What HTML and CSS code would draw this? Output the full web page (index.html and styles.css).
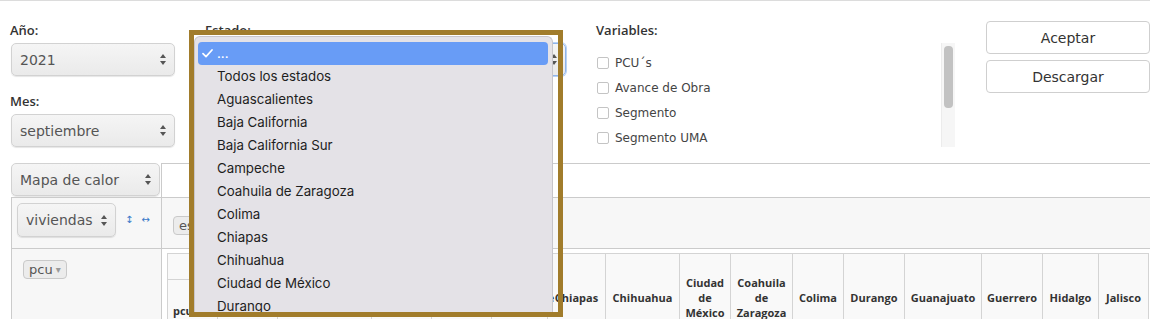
FILE: index.html
```html
<!DOCTYPE html>
<html lang="es">
<head>
<meta charset="utf-8">
<title>Reporte</title>
<link rel="stylesheet" href="styles.css">
</head>
<body>
<div class="page">
  <div class="topline"></div>
  <div class="filters">
    <div class="col">
      <div class="lbl">Año:</div>
      <div class="sel"><span>2021</span><svg class="arr" width="6" height="11" viewBox="0 0 6 11"><path d="M3 0 L6 4 L0 4 Z M0 7 L6 7 L3 11 Z" fill="#555"/></svg></div>
      <div class="lbl lbl-mes">Mes:</div>
      <div class="sel"><span>septiembre</span><svg class="arr" width="6" height="11" viewBox="0 0 6 11"><path d="M3 0 L6 4 L0 4 Z M0 7 L6 7 L3 11 Z" fill="#555"/></svg></div>
    </div>
    <div class="col">
      <div class="lbl">Estado:</div>
      <div class="sel sel-focus"><span>...</span><svg class="arr" width="6" height="11" viewBox="0 0 6 11"><path d="M3 0 L6 4 L0 4 Z M0 7 L6 7 L3 11 Z" fill="#555"/></svg></div>
    </div>
    <div class="col">
      <div class="lbl">Variables:</div>
      <div class="varbox">
        <ul class="varlist">
          <li><span class="cb"></span>PCU´s</li>
          <li><span class="cb"></span>Avance de Obra</li>
          <li><span class="cb"></span>Segmento</li>
          <li><span class="cb"></span>Segmento UMA</li>
        </ul>
        <div class="vscroll"><div class="thumb"></div></div>
      </div>
    </div>
    <div class="col col-btns">
      <button class="btn">Aceptar</button>
      <button class="btn">Descargar</button>
    </div>
  </div>

  <div class="pvt">
    <div class="c-renderer">
      <div class="sel sel-r"><span>Mapa de calor</span><svg class="arr" width="6" height="11" viewBox="0 0 6 11"><path d="M3 0 L6 4 L0 4 Z M0 7 L6 7 L3 11 Z" fill="#555"/></svg></div>
    </div>
    <div class="c-unused"></div>
    <div class="c-vals">
      <div class="sel sel-v"><span>viviendas</span><svg class="arr" width="6" height="11" viewBox="0 0 6 11"><path d="M3 0 L6 4 L0 4 Z M0 7 L6 7 L3 11 Z" fill="#555"/></svg></div>
      <span class="ord">↕</span><span class="ord">↔</span>
    </div>
    <div class="c-cols"><span class="pill">estado <span class="tri">▾</span></span></div>
    <div class="c-rows"><span class="pill">pcu <span class="tri">▾</span></span></div>
    <div class="c-area">
      <table class="ptable">
        <thead>
          <tr class="hr1">
            <th class="w-a"></th>
            <th class="w-b axis">estado</th>
            <th class="w-ags" rowspan="2">Aguascalientes</th>
            <th class="w-bc" rowspan="2">Baja California</th>
            <th class="w-bcs" rowspan="2">Baja California Sur</th>
            <th class="w-cam" rowspan="2">Campeche</th>
            <th class="w-chs" rowspan="2">Chiapas</th>
            <th class="w-chh" rowspan="2">Chihuahua</th>
            <th class="w-cdmx" rowspan="2">Ciudad de México</th>
            <th class="w-coa" rowspan="2">Coahuila de Zaragoza</th>
            <th class="w-col" rowspan="2">Colima</th>
            <th class="w-dur" rowspan="2">Durango</th>
            <th class="w-gto" rowspan="2">Guanajuato</th>
            <th class="w-gro" rowspan="2">Guerrero</th>
            <th class="w-hgo" rowspan="2">Hidalgo</th>
            <th class="w-jal" rowspan="2">Jalisco</th>
          </tr>
          <tr class="hr2">
            <th class="axis">pcu</th>
            <th></th>
          </tr>
        </thead>
      </table>
    </div>
  </div>

  <div class="menu-frame">
    <div class="menu">
      <div class="item active"><svg class="check" width="11" height="9" viewBox="0 0 11 9"><path d="M1 4.6 L4 7.6 L10 1" fill="none" stroke="#fff" stroke-width="1.7" stroke-linecap="round" stroke-linejoin="round"/></svg>...</div>
      <div class="item">Todos los estados</div>
      <div class="item">Aguascalientes</div>
      <div class="item">Baja California</div>
      <div class="item">Baja California Sur</div>
      <div class="item">Campeche</div>
      <div class="item">Coahuila de Zaragoza</div>
      <div class="item">Colima</div>
      <div class="item">Chiapas</div>
      <div class="item">Chihuahua</div>
      <div class="item">Ciudad de México</div>
      <div class="item">Durango</div>
    </div>
  </div>
</div>
</body>
</html>
```

FILE: styles.css
```css
html, body {
  margin: 0;
  padding: 0;
  overflow: hidden;
  background: #fff;
}
body {
  font-family: "DejaVu Sans", sans-serif;
  color: #444;
}
.page {
  position: relative;
  width: 1168px;
  height: 319px;
  overflow: hidden;
}
.topline {
  width: 1150px;
  height: 1px;
  background: #dcdcdc;
}
.filters {
  display: grid;
  grid-template-columns: 165px 361px 360px 164px;
  column-gap: 30px;
  margin-left: 10px;
  padding-top: 19px;
}
.col {
  display: flex;
  flex-direction: column;
}
.lbl {
  font-family: "Open Sans", sans-serif;
  font-weight: 600;
  font-size: 13px;
  line-height: 20px;
  color: #333;
  margin-bottom: 3px;
}
.lbl-mes {
  margin-top: 15px;
}
.sel {
  box-sizing: border-box;
  height: 33px;
  display: flex;
  align-items: center;
  justify-content: space-between;
  padding: 0 8px 0 8px;
  border: 1px solid #d2d2d2;
  border-radius: 5px;
  background: linear-gradient(to bottom, #f5f5f5, #eaeaea);
  box-shadow: 0 1px 1px rgba(0,0,0,0.10);
  font-size: 14px;
  color: #555;
  margin-left: 1px;
}
.sel .arr {
  flex: none;
}
.sel-focus {
  border-color: #8fb4ea;
  box-shadow: 0 0 0 1px #b9d2f4;
}
.varbox {
  display: flex;
  height: 104px;
}
.varlist {
  list-style: none;
  margin: 0;
  padding: 7px 0 0 1px;
  flex: 1;
  overflow: hidden;
}
.varlist li {
  height: 25px;
  display: flex;
  align-items: center;
  font-size: 12px;
  color: #444;
}
.cb {
  box-sizing: border-box;
  width: 12px;
  height: 12px;
  border: 1px solid #c4c4c4;
  border-radius: 2px;
  background: #fff;
  margin-right: 6px;
  flex: none;
}
.vscroll {
  box-sizing: border-box;
  width: 14px;
  background: #f6f6f6;
  border-left: 1px solid #ececec;
  padding: 3px 2px 0 2px;
  margin-right: 1px;
}
.thumb {
  height: 62px;
  border-radius: 4px;
  background: #c2c2c2;
}
.col-btns {
  gap: 6px;
  margin-top: 1px;
}
.btn {
  box-sizing: border-box;
  height: 33px;
  border: 1px solid #cfcfcf;
  border-radius: 4px;
  background: #fff;
  font-family: "DejaVu Sans", sans-serif;
  font-size: 14px;
  color: #333;
  padding: 0;
}

/* pivot */
.pvt {
  display: grid;
  grid-template-columns: 150px 989px;
  grid-template-rows: 34px 51px 80px;
  margin: 16px 0 0 11px;
  overflow: hidden;
}
.c-renderer .sel-r {
  height: 33px;
  width: 149px;
  margin-left: 0;
}
.c-unused {
  border-top: 1px solid #cbcbcb;
  border-left: 1px solid #cbcbcb;
  background: #fff;
}
.c-vals {
  border-top: 1px solid #cbcbcb;
  border-left: 1px solid #cbcbcb;
  background: #f7f7f7;
  padding: 5px;
  display: flex;
  align-items: flex-start;
}
.sel-v {
  width: 99px;
  height: 34px;
  margin-left: 0;
}
.ord {
  color: #3a78c9;
  font-size: 10px;
  line-height: 34px;
  margin-left: 9px;
}
.ord + .ord {
  margin-left: 8px;
}
.c-cols {
  border-top: 1px solid #cbcbcb;
  border-left: 1px solid #cbcbcb;
  background: #f7f7f7;
  padding: 17px 0 0 11px;
}
.c-rows {
  border-top: 1px solid #cbcbcb;
  border-left: 1px solid #cbcbcb;
  background: #f7f7f7;
  padding: 10px 0 0 11px;
}
.pill {
  display: inline-flex;
  align-items: center;
  box-sizing: border-box;
  height: 19px;
  padding: 0 5px;
  border: 1px solid #c9c9c9;
  border-radius: 4px;
  background: #ececec;
  font-size: 13px;
  color: #555;
}
.tri {
  color: #999;
  font-size: 10px;
  margin-left: 3px;
}
.c-area {
  border-top: 1px solid #cbcbcb;
  border-left: 1px solid #cbcbcb;
  background: #fff;
  padding: 4px 0 0 5px;
  overflow: hidden;
}
.ptable {
  border-collapse: collapse;
  table-layout: fixed;
  width: 981px;
}
.ptable th {
  box-sizing: border-box;
  border: 1px solid #d4d4d4;
  background: #f9f9f9;
  font-family: "Open Sans", sans-serif;
  font-weight: 700;
  font-size: 11px;
  line-height: 15px;
  color: #333;
  text-align: center;
  vertical-align: middle;
  padding: 0 5px;
}
.ptable th.axis {
  text-align: left;
}
.hr1 {
  height: 26px;
}
.hr2 {
  height: 62px;
}
.w-a { width: 50px; }
.w-b { width: 60px; }
.w-ags { width: 94px; }
.w-bc { width: 60px; }
.w-bcs { width: 60px; }
.w-cam { width: 56px; }
.w-chs { width: 58px; }
.w-chh { width: 74px; }
.w-cdmx { width: 51px; }
.w-coa { width: 62px; }
.w-col { width: 51px; }
.w-dur { width: 61px; }
.w-gto { width: 77px; }
.w-gro { width: 61px; }
.w-hgo { width: 56px; }
.w-jal { width: 50px; }

/* native menu overlay */
.menu-frame {
  position: absolute;
  left: 189px;
  top: 30px;
  width: 374px;
  height: 287px;
  box-sizing: border-box;
  border: 5px solid #a17c2b;
  overflow: hidden;
}
.menu {
  width: 359px;
  height: 300px;
  box-sizing: border-box;
  margin-top: 1px;
  background: #e4e2e7;
  border-top: 1px solid #c7c5ca;
  border-left: 1px solid #c7c5ca;
  border-right: 1px solid #c7c5ca;
  border-radius: 6px 6px 0 0;
  padding-top: 5px;
  font-family: "Inter", "Liberation Sans", sans-serif;
  font-size: 13.3px;
  color: #1e1e1e;
}
.item {
  position: relative;
  height: 23px;
  line-height: 23px;
  padding-left: 19px;
  margin: 0 4px 0 3px;
  border-radius: 4px;
  white-space: nowrap;
}
.item.active {
  background: #689cf6;
  color: #fff;
}
.check {
  position: absolute;
  left: 4px;
  top: 7px;
}
```
